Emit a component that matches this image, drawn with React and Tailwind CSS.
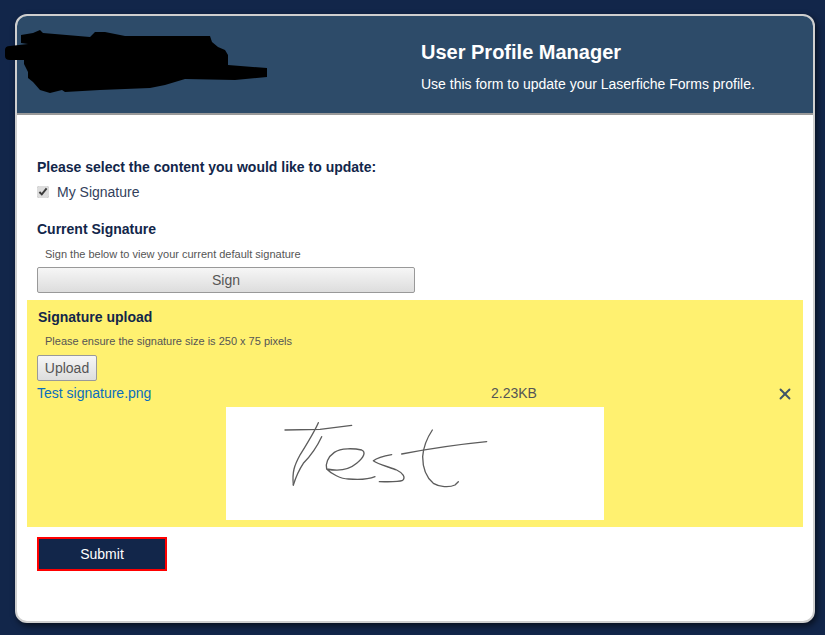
import React from 'react';
import { X } from 'lucide-react';

const Scribble = () => (
  <svg className="absolute left-0 top-0 w-[300px] h-[100px]" viewBox="0 0 300 100" fill="#000">
    <path d="M5 50 Q5 46 10 46 L28 44 L21 43 L21 35 L33 33 L40 30 L43 33 L90 37 L95 32 L105 32 L125 36 L210 36 L212 42 L218 47 L225 50 L228 55 L228 65 L267 68 L267 77 L235 80 L185 79 L165 85 L150 88 L100 90 L65 92 L62 90 L50 93 L40 90 L33 82 L28 78 L28 72 L24 64 L24 60 L10 60 Q5 60 5 56 Z" />
  </svg>
);

const SignatureDrawing = () => (
  <svg className="w-full h-full" viewBox="0 0 1134 339" fill="none" stroke="#5c5c5c" strokeWidth="4" strokeLinecap="round" strokeLinejoin="round">
    <path d="M177 69 L282 67 L377 55" />
    <path d="M277 47 C265 75 240 115 222 144 C205 175 198 195 202 234" />
    <path d="M287 89 C275 115 255 145 232 169 C218 190 208 215 202 234" />
    <path d="M302 186 C330 192 365 192 392 169 C415 150 420 135 407 129 C385 124 345 122 325 136 C305 150 298 170 302 186 C315 200 345 216 367 216 C390 218 425 218 447 209" />
    <path d="M497 143 C475 147 450 155 442 161 C455 172 490 180 512 189 C530 198 540 210 530 220 C515 226 485 224 460 224" />
    <path d="M527 141 C590 129 680 114 782 104" />
    <path d="M619 69 C605 90 592 120 590 149 C590 185 600 210 622 229 C640 240 670 242 687 234 L697 224" />
  </svg>
);

const App = () => {
  return (
    <div className="relative w-[825px] h-[635px] overflow-hidden bg-[#12264a] pt-[14px] pl-[15px] font-['Liberation_Sans',Arial,sans-serif]">
      <div className="w-[800px] h-[609px] rounded-[12px] border-2 border-[#cfcfcf] bg-white overflow-hidden shadow-[2px_3px_6px_rgba(0,0,0,0.6)]">
        <div className="flex h-[99px] bg-[#2d4b69] border-b-2 border-[#999999] pl-[404px] pt-[23px]">
          <div className="text-white">
            <h1 className="text-[20px] leading-[26px] font-bold">User Profile Manager</h1>
            <p className="mt-[9px] text-[14px] leading-[20px]">Use this form to update your Laserfiche Forms profile.</p>
          </div>
        </div>

        <div className="px-[20px] pt-[43px]">
          <h2 className="text-[14px] leading-[18px] font-bold text-[#12264a]">Please select the content you would like to update:</h2>
          <label className="mt-[6px] flex items-center gap-[8px] text-[14px] leading-[20px] text-[#333f5c]">
            <input type="checkbox" defaultChecked className="w-[12px] h-[12px] accent-[#dddddd]" />
            My Signature
          </label>
          <h2 className="mt-[18px] text-[14px] leading-[18px] font-bold text-[#12264a]">Current Signature</h2>
          <p className="mt-[9px] pl-[8px] text-[11px] leading-[15px] text-[#555555]">Sign the below to view your current default signature</p>
          <button className="mt-[5px] block w-[378px] h-[26px] border border-[#999999] rounded-[2px] bg-gradient-to-b from-[#f6f6f6] to-[#dddddd] text-[14px] text-[#555555]">Sign</button>
        </div>

        <div className="mx-[10px] mt-[7px] h-[227px] bg-[#fff170] px-[10px] pt-[8px]">
          <h2 className="pl-[1px] text-[14px] leading-[18px] font-bold text-[#12264a]">Signature upload</h2>
          <p className="mt-[8px] pl-[8px] text-[11px] leading-[15px] text-[#555555]">Please ensure the signature size is 250 x 75 pixels</p>
          <button className="mt-[6px] block w-[60px] h-[26px] border border-[#999999] rounded-[2px] bg-gradient-to-b from-[#f6f6f6] to-[#dddddd] text-[14px] text-[#555555]">Upload</button>
          <div className="relative h-[26px] text-[14px] leading-[24px]">
            <a className="text-[#0a6ebd]">Test signature.png</a>
            <span className="absolute left-[454px] top-0 text-[#555555]">2.23KB</span>
            <X className="absolute right-[-1px] top-[4px] w-[18px] h-[18px] text-[#3f5468]" strokeWidth={2.5} />
          </div>
          <div className="ml-[189px] w-[378px] h-[113px] bg-white">
            <SignatureDrawing />
          </div>
        </div>

        <div className="px-[20px] pt-[10px]">
          <button className="w-[130px] h-[34px] border-2 border-[#ff0000] bg-[#12264a] text-[14px] text-white">Submit</button>
        </div>
      </div>
      <Scribble />
    </div>
  );
};

export default App;
